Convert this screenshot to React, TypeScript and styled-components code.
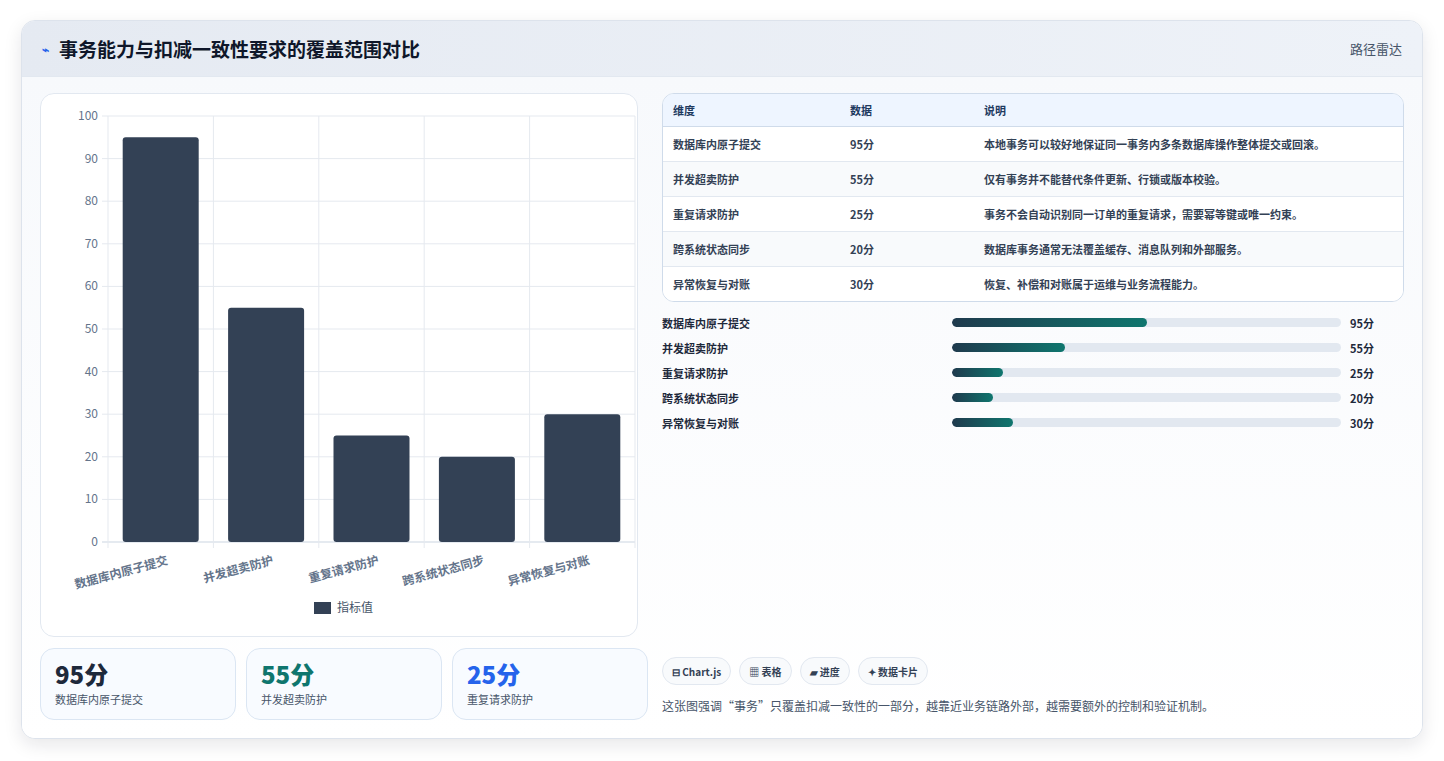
import React from "react";
import styled, { createGlobalStyle } from "styled-components";

const GlobalStyle = createGlobalStyle`
  body {
    margin: 0;
    background: #ffffff;
    font-family: "Noto Sans CJK SC", "Noto Sans", sans-serif;
    color: #1e293b;
  }
`;

const Page = styled.div`
  padding: 20px 21px 22px 21px;
`;

const Card = styled.div`
  border: 1px solid #dde3ec;
  border-radius: 14px;
  background: #ffffff;
  box-shadow: 0 6px 18px rgba(15, 23, 42, 0.1);
  overflow: hidden;
`;

const Header = styled.div`
  height: 55px;
  display: flex;
  align-items: center;
  justify-content: space-between;
  padding: 0 20px;
  background: linear-gradient(90deg, #e5eaf2, #eef2f8);
  border-bottom: 1px solid #e2e8f0;
`;

const Title = styled.h1`
  margin: 0;
  font-size: 19px;
  font-weight: 700;
  color: #0f172a;
  display: flex;
  align-items: center;
  gap: 10px;
`;

const Icon = styled.span`
  font-size: 12px;
  color: #2563eb;
`;

const HeaderLink = styled.span`
  font-size: 13px;
  color: #475569;
`;

const Body = styled.div`
  display: grid;
  grid-template-columns: 607px 1fr;
  gap: 15px;
  padding: 16px 18px 18px 18px;
  background: linear-gradient(180deg, #f7f9fc, #ffffff);
`;

const Col = styled.div`
  display: flex;
  flex-direction: column;
  gap: 11px;
`;

const ChartCard = styled.div`
  height: 542px;
  border: 1px solid #e2e8f0;
  border-radius: 14px;
  background: #fff;
  width: 596px;
`;

const Stats = styled.div`
  display: grid;
  grid-template-columns: repeat(3, 196px);
  gap: 10px;
`;

const Stat = styled.div`
  height: 72px;
  box-sizing: border-box;
  border: 1px solid #dbe6f3;
  border-radius: 14px;
  background: #f8fbff;
  padding: 10px 14px;
`;

const StatValue = styled.div<{ $c: string }>`
  font-size: 24px;
  font-weight: 800;
  line-height: 30px;
  color: ${(p) => p.$c};
`;

const StatLabel = styled.div`
  font-size: 11px;
  color: #475569;
  margin-top: 2px;
`;

const RightCol = styled.div`
  display: flex;
  flex-direction: column;
  margin-right: 0;
`;

const TableWrap = styled.div`
  border: 1px solid #cfdbea;
  border-radius: 12px;
  overflow: hidden;
  background: #fff;
`;

const Table = styled.table`
  width: 100%;
  border-collapse: collapse;
  font-size: 11px;
`;

const Th = styled.th`
  text-align: left;
  font-weight: 700;
  color: #1e3a5f;
  background: #eef5ff;
  height: 32px;
  padding: 0 10px;
  border-bottom: 1px solid #cfdbea;
`;

const Td = styled.td`
  height: 34px;
  padding: 0 10px;
  color: #334155;
  font-weight: 600;
  border-bottom: 1px solid #e2e8f0;
  tr:last-child & {
    border-bottom: none;
  }
`;

const Tr = styled.tr<{ $alt: boolean }>`
  background: ${(p) => (p.$alt ? "#f8fafc" : "#ffffff")};
`;

const Bars = styled.div`
  display: flex;
  flex-direction: column;
  gap: 8px;
  margin-top: 12px;
`;

const BarRow = styled.div`
  display: grid;
  grid-template-columns: 281px 389px 1fr;
  align-items: center;
  gap: 9px;
  font-size: 11px;
  font-weight: 600;
  height: 17px;
`;

const Track = styled.div`
  height: 9px;
  border-radius: 5px;
  background: #e2e8f0;
  overflow: hidden;
`;

const Fill = styled.div`
  height: 100%;
  border-radius: 5px;
  background: linear-gradient(90deg, #1f3a4d, #0f766e);
`;

const Spacer = styled.div`
  flex: 1;
`;

const Chips = styled.div`
  display: flex;
  gap: 8px;
`;

const Chip = styled.span`
  height: 28px;
  box-sizing: border-box;
  display: inline-flex;
  align-items: center;
  padding: 0 9px;
  border: 1px solid #e2e8f0;
  border-radius: 14px;
  font-size: 10px;
  font-weight: 700;
  color: #334155;
  background: #f8fafc;
`;

const Note = styled.p`
  margin: 12px 0 6px;
  font-size: 12px;
  color: #475569;
`;

const rows = [
  { name: "数据库内原子提交", v: 95, d: "本地事务可以较好地保证同一事务内多条数据库操作整体提交或回滚。" },
  { name: "并发超卖防护", v: 55, d: "仅有事务并不能替代条件更新、行锁或版本校验。" },
  { name: "重复请求防护", v: 25, d: "事务不会自动识别同一订单的重复请求，需要幂等键或唯一约束。" },
  { name: "跨系统状态同步", v: 20, d: "数据库事务通常无法覆盖缓存、消息队列和外部服务。" },
  { name: "异常恢复与对账", v: 30, d: "恢复、补偿和对账属于运维与业务流程能力。" },
];

const Chart = () => {
  const x0 = 67, x1 = 594, y0 = 22, y1 = 448;
  const cw = (x1 - x0) / 5;
  const ticks = Array.from({ length: 11 }, (_, i) => i * 10);
  const yOf = (v: number) => y1 - ((y1 - y0) * v) / 100;
  return (
    <svg width="596" height="542" fontFamily="'Noto Sans CJK SC', sans-serif">
      {ticks.map((t) => (
        <g key={t}>
          <line x1={x0 - 6} x2={x1} y1={yOf(t)} y2={yOf(t)} stroke={t === 0 ? "#cbd5e1" : "#e5e9ef"} />
          <text x={x0 - 10} y={yOf(t) + 4} fontSize="12" fill="#64748b" textAnchor="end">{t}</text>
        </g>
      ))}
      {Array.from({ length: 6 }, (_, i) => (
        <line key={i} x1={x0 + i * cw} x2={x0 + i * cw} y1={y0} y2={y1 + 6} stroke="#e5e9ef" />
      ))}
      {rows.map((r, i) => {
        const cx = x0 + cw * i + cw / 2;
        return (
          <g key={r.name}>
            <rect x={cx - 38} y={yOf(r.v)} width={76} height={y1 - yOf(r.v)} rx={3} fill="#334155" />
            <text
              x={cx + 8}
              y={y1 + 22}
              fontSize="12"
              fontWeight="700"
              fill="#64748b"
              textAnchor="end"
              transform={`rotate(-15 ${cx + 8} ${y1 + 22})`}
            >
              {r.name}
            </text>
          </g>
        );
      })}
      <rect x={273} y={508} width={17} height={12} fill="#334155" />
      <text x={296} y={518} fontSize="12" fill="#475569">指标值</text>
    </svg>
  );
};

export default function App() {
  return (
    <>
      <GlobalStyle />
      <Page>
        <Card>
          <Header>
            <Title>
              <Icon>⌁</Icon>事务能力与扣减一致性要求的覆盖范围对比
            </Title>
            <HeaderLink>路径雷达</HeaderLink>
          </Header>
          <Body>
            <Col>
              <ChartCard>
                <Chart />
              </ChartCard>
              <Stats>
                <Stat>
                  <StatValue $c="#1e293b">95分</StatValue>
                  <StatLabel>数据库内原子提交</StatLabel>
                </Stat>
                <Stat>
                  <StatValue $c="#0f766e">55分</StatValue>
                  <StatLabel>并发超卖防护</StatLabel>
                </Stat>
                <Stat>
                  <StatValue $c="#2563eb">25分</StatValue>
                  <StatLabel>重复请求防护</StatLabel>
                </Stat>
              </Stats>
            </Col>
            <RightCol>
              <TableWrap>
                <Table>
                  <thead>
                    <tr>
                      <Th style={{ width: 157 }}>维度</Th>
                      <Th style={{ width: 114 }}>数据</Th>
                      <Th>说明</Th>
                    </tr>
                  </thead>
                  <tbody>
                    {rows.map((r, i) => (
                      <Tr key={r.name} $alt={i % 2 === 1}>
                        <Td>{r.name}</Td>
                        <Td>{r.v}分</Td>
                        <Td>{r.d}</Td>
                      </Tr>
                    ))}
                  </tbody>
                </Table>
              </TableWrap>
              <Bars>
                {rows.map((r) => (
                  <BarRow key={r.name}>
                    <span>{r.name}</span>
                    <Track>
                      <Fill style={{ width: `${r.v / 1.9}%` }} />
                    </Track>
                    <span>{r.v}分</span>
                  </BarRow>
                ))}
              </Bars>
              <Spacer />
              <Chips>
                <Chip>⊟ Chart.js</Chip>
                <Chip>▦ 表格</Chip>
                <Chip>▰ 进度</Chip>
                <Chip>✦ 数据卡片</Chip>
              </Chips>
              <Note>这张图强调“事务”只覆盖扣减一致性的一部分，越靠近业务链路外部，越需要额外的控制和验证机制。</Note>
            </RightCol>
          </Body>
        </Card>
      </Page>
    </>
  );
}
